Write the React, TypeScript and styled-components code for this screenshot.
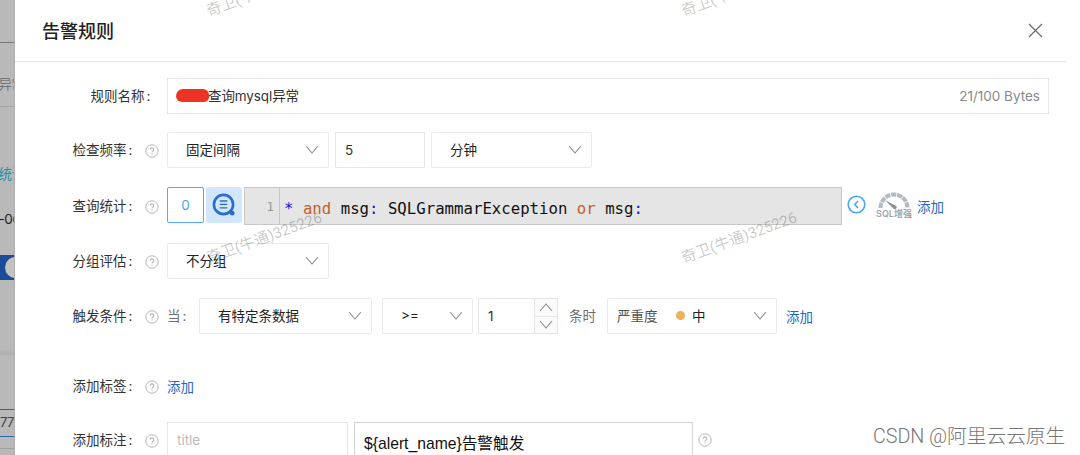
import React from 'react';
import styled, { createGlobalStyle } from 'styled-components';

const GlobalStyle = createGlobalStyle`
    * {
        box-sizing: border-box;
    }

    body {
        margin: 0;
        background: #fff;
        font-family: Inter, 'Noto Sans CJK SC', sans-serif;
        font-size: 13.5px;
        color: #333;
    }
`;

const Page = styled.div`
    position: relative;
    display: flex;
    width: 1080px;
    height: 455px;
    overflow: hidden;
`;

const Backdrop = styled.div`
    display: flex;
    flex-direction: column;
    width: 15px;
    height: 455px;
    overflow: hidden;
    background: #b9b9b9;
    border-right: 1px solid #b0b0b0;
    white-space: nowrap;
`;

const BackdropLine = styled.div<{ $height: number; $top?: number; $color?: string; $line?: string }>`
    flex: none;
    height: ${({ $height }) => $height}px;
    padding-top: ${({ $top }) => $top || 0}px;
    line-height: 20px;
    text-indent: -1.5px;
    letter-spacing: -0.4px;
    color: ${({ $color }) => $color || '#222'};
    border-bottom: 1px solid ${({ $line }) => $line || 'transparent'};
`;

const BackdropSwitch = styled.div`
    flex: none;
    display: flex;
    align-items: center;
    height: 25px;
    margin-top: 25px;
    padding-left: 5px;
    background: #1b4c97;

    &::before {
        content: '';
        flex: none;
        width: 21px;
        height: 21px;
        border-radius: 50%;
        background: #c2c2c2;
    }
`;

const BackdropPanel = styled.div`
    flex: none;
    height: 6px;
    margin-top: 69px;
    background: linear-gradient(#b9b9b9, #aeaeae);
`;

const BackdropField = styled.div`
    flex: none;
    height: 28px;
    margin-top: 54px;
    line-height: 25px;
    border-top: 1px solid #2f65ad;
    border-bottom: 1px solid #2f65ad;
    font-size: 13px;
    letter-spacing: -0.5px;
    color: #444;
`;

const Drawer = styled.section`
    width: 1051px;
    height: 455px;
    background: #fff;
`;

const Header = styled.header`
    display: flex;
    align-items: center;
    justify-content: space-between;
    height: 62px;
    padding: 0 23px 0 27px;
    border-bottom: 1px solid #e5e5e5;
`;

const Title = styled.h1`
    margin: 2px 0 0;
    font-size: 18px;
    font-weight: 500;
    line-height: 24px;
    color: #222;
`;

const Form = styled.div`
    display: flex;
    flex-direction: column;
    padding: 16px 17px 0 57px;
`;

const Row = styled.div<{ $gap?: number; $height?: number }>`
    display: flex;
    align-items: center;
    height: ${({ $height }) => $height || 36}px;
    margin-bottom: ${({ $gap }) => $gap ?? 19}px;
`;

const Label = styled.label<{ $indent?: number }>`
    flex: none;
    display: flex;
    align-items: center;
    justify-content: space-between;
    width: 95px;
    padding: 0 8px 0 ${({ $indent }) => $indent || 0}px;
    white-space: nowrap;

    svg {
        margin-top: 2px;
    }
`;

const LabelText = styled.span`
    padding: 0 0 3px 0.5px;
`;

const Colon = styled.span`
    padding-left: 2px;
`;

const Field = styled.div<{ $width: number; $color?: string; $left?: number; $pad?: number; $dark?: boolean }>`
    flex: none;
    display: flex;
    align-items: center;
    width: ${({ $width }) => $width}px;
    height: 36px;
    margin-left: ${({ $left }) => $left || 0}px;
    padding: 0 8px 1px ${({ $pad }) => $pad ?? 9}px;
    border: 1px solid ${({ $dark }) => ($dark ? '#d4d4d4' : '#e6e6e6')};
    color: ${({ $color }) => $color || '#333'};
    background: #fff;
    white-space: nowrap;
`;

const SelectBox = styled(Field)`
    justify-content: space-between;
    padding-bottom: 2px;
    padding-right: 9px;
    border-color: #ebebeb;
    border-radius: 2px;
    color: #222;
`;

const Redacted = styled.i`
    width: 33px;
    height: 13px;
    margin: 1px -1px 1px -1px;
    border-radius: 7px 6px 5px 6px;
    background: #ee3325;
`;

const RuleName = styled.span`
    padding-bottom: 2px;
    letter-spacing: -0.1px;
`;

const Counter = styled.span`
    margin-left: auto;
    font-size: 13.5px;
    color: #8a8a8a;
`;

const QueryIndex = styled.div`
    flex: none;
    width: 37px;
    height: 36px;
    margin-bottom: 2px;
    border: 1px solid #55aaf0;
    border-radius: 2px;
    text-align: center;
    line-height: 35px;
    color: #4ba5ee;
`;

const QueryButton = styled.div`
    flex: none;
    display: flex;
    align-items: center;
    justify-content: center;
    width: 36px;
    height: 36px;
    margin: 0 2px 2px;
    border-radius: 3px;
    background: #d2e6fd;
`;

const Editor = styled.div`
    flex: none;
    display: flex;
    width: 598px;
    height: 38px;
    border: 1px solid #c8c8c8;
    background: #e5e5e5;
    font-family: 'DejaVu Sans Mono', monospace;
    font-size: 15.7px;
    line-height: 41px;
    white-space: pre;
`;

const Gutter = styled.div`
    width: 35px;
    padding-right: 5px;
    border-right: 1px solid #c8c8c8;
    text-align: right;
    font-size: 13px;
    line-height: 37px;
    color: #999;
`;

const Code = styled.div`
    padding-left: 4px;
    color: #111;
`;

const Token = styled.span<{ $kind: 'keyword' | 'operator' }>`
    color: ${({ $kind }) => ($kind === 'keyword' ? '#c4602b' : '#1414cc')};
`;

const EditorTools = styled.div`
    display: flex;
    align-items: center;
    padding-left: 5px;

    > svg {
        margin-bottom: 4px;
    }
`;

const Boost = styled.div`
    display: flex;
    flex-direction: column;
    align-items: center;
    width: 36px;
    margin: 0 5px 2px 10px;
    font-size: 9px;
    font-weight: 600;
    line-height: 10px;
    color: #a3a7ac;
    white-space: nowrap;
`;

const Link = styled.a<{ $left?: number }>`
    margin: 0 0 1px ${({ $left }) => $left || 0}px;
    color: #2068c4;
    white-space: nowrap;
`;

const Muted = styled.span<{ $width: number; $left?: number }>`
    flex: none;
    width: ${({ $width }) => $width}px;
    padding: 0 0 3px ${({ $left }) => $left || 0}px;
    color: #6e6e6e;
    white-space: nowrap;
`;

const NumberBox = styled(Field)`
    padding-right: 0;
    padding-bottom: 0;
    align-items: stretch;
    line-height: 34px;
`;

const Stepper = styled.div`
    display: grid;
    grid-template-rows: 1fr 1fr;
    place-items: center;
    width: 23px;
    margin-left: auto;
    border-left: 1px solid #e6e6e6;
    background: linear-gradient(#e6e6e6, #e6e6e6) 0 50% / 100% 1px no-repeat #fafafa;
`;

const Severity = styled.span`
    display: flex;
    align-items: center;
    color: #222;
`;

const SeverityLabel = styled.span`
    width: 59px;
    color: #555;
`;

const Dot = styled.i`
    width: 9px;
    height: 9px;
    margin-right: 7px;
    border-radius: 50%;
    background: #f2b057;
`;

const TemplateText = styled.span`
    padding-top: 6px;
    font-family: 'Liberation Sans', 'Noto Sans CJK SC', sans-serif;
    font-size: 15.7px;
    color: #111;
`;

const HelpAfter = styled.span`
    display: flex;
    padding-left: 5px;
`;

const Watermark = styled.span<{ $x: number; $y: number }>`
    position: absolute;
    left: ${({ $x }) => $x}px;
    top: ${({ $y }) => $y}px;
    transform: rotate(-20deg);
    transform-origin: 0 100%;
    font-family: Roboto, 'Noto Sans CJK SC', sans-serif;
    font-size: 15.1px;
    line-height: 18px;
    color: rgba(0, 0, 0, 0.22);
    white-space: nowrap;
    pointer-events: none;
`;

const Credit = styled.span`
    position: absolute;
    left: 873px;
    top: 425px;
    font-family: Roboto, 'Noto Sans CJK SC', sans-serif;
    font-size: 19.75px;
    font-weight: 300;
    line-height: 24px;
    letter-spacing: -0.05px;
    color: #777;
    white-space: nowrap;
`;

const HelpIcon = () => (
    <svg width="14" height="14" viewBox="0 0 14 14" fill="none" stroke="#b5b5b5">
        <circle cx="7" cy="7" r="6.2" />
        <path d="M5.2 5.7a1.8 1.8 0 1 1 2.7 1.5c-.6.4-.9.7-.9 1.3M7 9.5v1" strokeWidth="1.1" />
    </svg>
);

const Chevron = ({ up = false }: { up?: boolean }) => (
    <svg width="14" height="9" viewBox="0 0 14 9" fill="none" stroke="#8c8c8c" strokeWidth="1.1">
        <path d={up ? 'M1 8l6-7 6 7' : 'M1 1l6 7 6-7'} />
    </svg>
);

const CloseIcon = () => (
    <svg width="15" height="15" viewBox="0 0 15 15" stroke="#6f6f6f" strokeWidth="1.3">
        <path d="M1 1l13 13M14 1L1 14" />
    </svg>
);

const QueryIcon = () => (
    <svg width="24" height="24" viewBox="0 0 24 24" fill="none" stroke="#2a6dcb">
        <circle cx="11.5" cy="11.5" r="9.6" strokeWidth="2.6" />
        <path d="M7.7 8h7.6M7.7 11.4h7.6M7.7 14.8h7.6" strokeWidth="1.3" />
        <path d="M17.5 17.5l2.2 2.2" strokeWidth="3" />
        <circle cx="20.2" cy="20.2" r="2.4" fill="#2a6dcb" stroke="none" />
    </svg>
);

const CollapseIcon = () => (
    <svg width="19" height="19" viewBox="0 0 19 19" fill="none" stroke="#4ba7ed">
        <circle cx="9.5" cy="9.5" r="8.3" strokeWidth="1.6" />
        <path d="M11 6L7.8 9.5 11 13" strokeWidth="1.6" />
    </svg>
);

const GaugeIcon = () => (
    <svg width="32" height="17" viewBox="0 0 32 17" fill="none">
        <path d="M2.5 16a13.5 13.5 0 0 1 27 0" stroke="#b3bac1" strokeWidth="4" strokeDasharray="5.3 0.75" />
        <path d="M7.2 8.4l10.3 5a1.9 1.9 0 1 1-2.4 2.8z" fill="#8d9094" />
    </svg>
);

interface FormLabelProps {
    text: string;
    help?: boolean;
    indent?: number;
}

const FormLabel: React.FC<FormLabelProps> = ({ text, help = true, indent }) => (
    <Label $indent={indent}>
        <LabelText>
            {text}
            <Colon>:</Colon>
        </LabelText>
        {help && <HelpIcon />}
    </Label>
);

interface SelectProps {
    width: number;
    left?: number;
    pad?: number;
    children: React.ReactNode;
}

const Select: React.FC<SelectProps> = ({ width, left, pad = 18, children }) => (
    <SelectBox $width={width} $left={left} $pad={pad}>
        {children}
        <Chevron />
    </SelectBox>
);

const watermarks = [
    { x: 210, y: 2 },
    { x: 685, y: 2 },
    { x: 210, y: 249 },
    { x: 685, y: 249 },
];

const App: React.FC = () => (
    <>
        <GlobalStyle />
        <Page>
            <Backdrop>
                <BackdropLine $height={43} $line="#777" />
                <BackdropLine $height={64} $top={31} $line="#a5a5a5" $color="#777">异常</BackdropLine>
                <BackdropLine $height={88} $top={57} $color="#2590aa">统计</BackdropLine>
                <BackdropLine $height={35} $top={14}>-06</BackdropLine>
                <BackdropSwitch />
                <BackdropPanel />
                <BackdropField>77</BackdropField>
                <BackdropLine $height={12} $line="#a0a0a0" />
            </Backdrop>
            <Drawer>
                <Header>
                    <Title>告警规则</Title>
                    <CloseIcon />
                </Header>
                <Form>
                    <Row $gap={18}>
                        <FormLabel text="规则名称" help={false} indent={18} />
                        <Field $width={882}>
                            <Redacted />
                            <RuleName>查询mysql异常</RuleName>
                            <Counter>21/100 Bytes</Counter>
                        </Field>
                    </Row>
                    <Row>
                        <FormLabel text="检查频率" />
                        <Select width={162}>固定间隔</Select>
                        <Field $width={90} $left={6}>5</Field>
                        <Select width={161} left={6}>分钟</Select>
                    </Row>
                    <Row $height={38} $gap={18}>
                        <FormLabel text="查询统计" />
                        <QueryIndex>0</QueryIndex>
                        <QueryButton>
                            <QueryIcon />
                        </QueryButton>
                        <Editor>
                            <Gutter>1</Gutter>
                            <Code>
                                <Token $kind="operator">*</Token> <Token $kind="keyword">and</Token> msg
                                <Token $kind="operator">:</Token> SQLGrammarException{' '}
                                <Token $kind="keyword">or</Token> msg<Token $kind="operator">:</Token>
                            </Code>
                        </Editor>
                        <EditorTools>
                            <CollapseIcon />
                            <Boost>
                                <GaugeIcon />
                                SQL增强
                            </Boost>
                            <Link>添加</Link>
                        </EditorTools>
                    </Row>
                    <Row>
                        <FormLabel text="分组评估" />
                        <Select width={162}>不分组</Select>
                    </Row>
                    <Row $gap={34}>
                        <FormLabel text="触发条件" />
                        <Muted $width={32}>
                            当<Colon>:</Colon>
                        </Muted>
                        <Select width={173}>有特定条数据</Select>
                        <Select width={91} left={10}>&gt;=</Select>
                        <NumberBox $width={80} $left={5}>
                            1
                            <Stepper>
                                <Chevron up />
                                <Chevron />
                            </Stepper>
                        </NumberBox>
                        <Muted $width={49} $left={11}>条时</Muted>
                        <Select width={170} pad={9}>
                            <Severity>
                                <SeverityLabel>严重度</SeverityLabel>
                                <Dot />
                                中
                            </Severity>
                        </Select>
                        <Link $left={9}>添加</Link>
                    </Row>
                    <Row $gap={18}>
                        <FormLabel text="添加标签" />
                        <Link>添加</Link>
                    </Row>
                    <Row $gap={0}>
                        <FormLabel text="添加标注" />
                        <Field $width={181} $color="#bbb">title</Field>
                        <Field $width={339} $left={6} $dark>
                            <TemplateText>{'${alert_name}告警触发'}</TemplateText>
                        </Field>
                        <HelpAfter>
                            <HelpIcon />
                        </HelpAfter>
                    </Row>
                </Form>
            </Drawer>
            {watermarks.map(({ x, y }) => (
                <Watermark key={`${x}-${y}`} $x={x} $y={y}>奇卫(牛通)325226</Watermark>
            ))}
            <Credit>CSDN @阿里云云原生</Credit>
        </Page>
    </>
);

export default App;
